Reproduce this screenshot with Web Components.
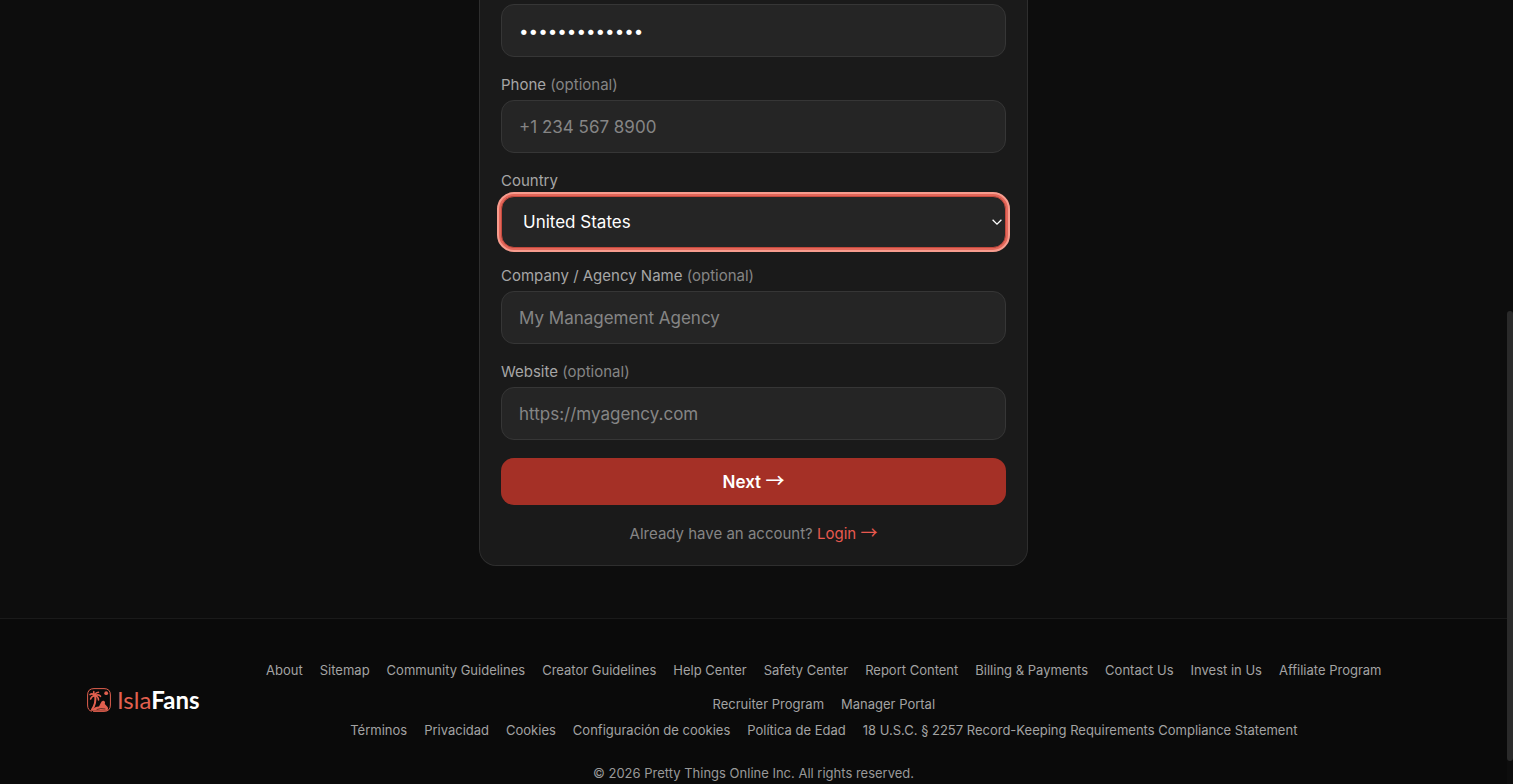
<!DOCTYPE html>
<html lang="es">
<head>
  <meta charset="utf-8">
  <meta name="viewport" content="width=device-width, initial-scale=1">
  <title>IslaFans</title>
  <style>
    body {
      background: #0d0d0d;
      color: #a3a3a3;
      font-family: Inter, "Liberation Sans", sans-serif;
      margin: 0;
    }
  </style>
</head>
<body>
  <isla-page>
    <isla-card>
      <isla-field type="password" label="Password" value="management123" bare></isla-field>
      <isla-field type="tel" label="Phone" placeholder="+1 234 567 8900" optional></isla-field>
      <isla-select label="Country" options="United States,Canada,España,México"></isla-select>
      <isla-field type="text" label="Company / Agency Name" placeholder="My Management Agency" optional></isla-field>
      <isla-field type="url" label="Website" placeholder="https://myagency.com" optional></isla-field>
      <isla-button>Next</isla-button>
      <isla-prompt link-text="Login">Already have an account?</isla-prompt>
    </isla-card>

    <isla-footer slot="footer">
      <isla-logo slot="logo"></isla-logo>
      <isla-links items="About|Sitemap|Community Guidelines|Creator Guidelines|Help Center|Safety Center|Report Content|Billing &amp; Payments|Contact Us|Invest in Us|Affiliate Program|Recruiter Program|Manager Portal"></isla-links>
      <isla-links items="Términos|Privacidad|Cookies|Configuración de cookies|Política de Edad|18 U.S.C. § 2257 Record-Keeping Requirements Compliance Statement"></isla-links>
      <span slot="copyright">© 2026 Pretty Things Online Inc. All rights reserved.</span>
    </isla-footer>
  </isla-page>

  <script>
    class Page extends HTMLElement {
      constructor() {
        super();

        this.attachShadow({ mode: 'open' });
        this.shadowRoot.innerHTML = `
          <style>
            :host {
              display: flex;
              min-height: 100vh;
            }

            #content {
              display: flex;
              flex: 1;
              flex-direction: column;
              min-width: 0;
            }

            main {
              display: flex;
              justify-content: center;
              padding-bottom: 52px;
            }

            #rail {
              display: flex;
              flex-direction: column;
              height: 100vh;
              position: sticky;
              top: 0;
              width: 6px;
            }

            #before { flex: 311; }
            #after { flex: 23; }

            #thumb {
              background: #2a2a2a;
              border-radius: 3px;
              flex: 450;
            }
          </style>

          <div id="content">
            <main><slot></slot></main>
            <slot name="footer"></slot>
          </div>
          <div id="rail" aria-hidden="true">
            <div id="before"></div>
            <div id="thumb"></div>
            <div id="after"></div>
          </div>
        `;
      }
    }

    class Card extends HTMLElement {
      constructor() {
        super();

        this.attachShadow({ mode: 'open' });
        this.shadowRoot.innerHTML = `
          <style>
            :host {
              background: #1a1a1a;
              border: 1px solid #2e2e2e;
              border-radius: 0 0 17px 17px;
              border-top: 0;
              box-sizing: border-box;
              max-width: 549px;
              padding: 4px 21px 21px;
              width: 100%;
            }

            form {
              display: flex;
              flex-direction: column;
              gap: 18px;
            }
          </style>

          <form><slot></slot></form>
        `;
      }
    }

    // Styles shared by every labelled control
    const controlStyles = `
      :host {
        display: flex;
        flex-direction: column;
        gap: 5px;
      }

      label {
        color: #a6a6a6;
        font-size: 15px;
        line-height: 20px;
      }

      label span {
        color: #858585;
      }

      input,
      select {
        appearance: none;
        background: #252525;
        border: 1px solid #363636;
        border-radius: 13px;
        box-sizing: border-box;
        color: #fff;
        font-family: inherit;
        font-size: 17px;
        margin: 0;
        outline: 0;
        width: 100%;
      }
    `;

    class Field extends HTMLElement {
      constructor() {
        super();

        this.attachShadow({ mode: 'open' });
      }

      connectedCallback() {
        this._build();
      }

      _build() {
        const label = this.getAttribute('label');
        const optional = this.hasAttribute('optional') ? ' <span>(optional)</span>' : '';
        const bare = this.hasAttribute('bare');

        this.shadowRoot.innerHTML = `
          <style>
            ${controlStyles}

            input {
              height: 53px;
              padding: 0 17px;
            }

            input::placeholder {
              color: #858585;
              opacity: 1;
            }
          </style>

          ${bare ? '' : `<label for="control">${label}${optional}</label>`}
          <input id="control" ${bare ? `aria-label="${label}"` : ''}>
        `;

        const input = this.shadowRoot.getElementById('control');
        input.type = this.getAttribute('type') || 'text';
        input.placeholder = this.getAttribute('placeholder') || '';
        input.value = this.getAttribute('value') || '';
      }
    }

    class Select extends HTMLElement {
      constructor() {
        super();

        this.attachShadow({ mode: 'open' });
      }

      connectedCallback() {
        this._build();
      }

      _build() {
        const options = this.getAttribute('options').split(',');

        this.shadowRoot.innerHTML = `
          <style>
            ${controlStyles}

            #wrap {
              display: grid;
              position: relative;
            }

            select {
              border-color: #c44a3e;
              box-shadow: 0 0 0 3px #e4675a;
              height: 52px;
              outline: 2px solid #f79c8e;
              outline-offset: 2px;
              padding: 0 21px;
            }

            svg {
              height: 10px;
              pointer-events: none;
              position: absolute;
              right: 4px;
              top: 21px;
              width: 10px;
            }
          </style>

          <label for="control">${this.getAttribute('label')}</label>
          <div id="wrap">
            <select id="control">
              ${options.map(option => `<option>${option}</option>`).join('')}
            </select>
            <svg viewBox="0 0 10 10" fill="none" stroke="#fff" stroke-width="1.3" aria-hidden="true">
              <path d="M.6 2.8 5 7.2 9.4 2.8"/>
            </svg>
          </div>
        `;
      }
    }

    class Button extends HTMLElement {
      constructor() {
        super();

        this.attachShadow({ mode: 'open' });
        this.shadowRoot.innerHTML = `
          <style>
            :host {
              display: flex;
            }

            button {
              background: #a53026;
              border: 0;
              border-radius: 13px;
              color: #fff;
              cursor: pointer;
              flex: 1;
              font-family: inherit;
              font-size: 17px;
              font-weight: 600;
              height: 47px;
              line-height: 21px;
              padding: 0;
            }

            span {
              font-family: "Noto Sans CJK JP", sans-serif;
              font-size: 19px;
              font-weight: 500;
              line-height: 1;
            }
          </style>

          <button type="button"><slot></slot> <span>→</span></button>
        `;
      }
    }

    class Prompt extends HTMLElement {
      constructor() {
        super();

        this.attachShadow({ mode: 'open' });
      }

      connectedCallback() {
        this.shadowRoot.innerHTML = `
          <style>
            :host {
              color: #858585;
              display: block;
              font-size: 15px;
              line-height: 21px;
              text-align: center;
            }

            a {
              color: #e8594f;
              text-decoration: none;
            }

            span {
              font-family: "Noto Sans CJK JP", sans-serif;
              font-size: 17px;
              line-height: 1;
            }
          </style>

          <slot></slot> <a href="#login">${this.getAttribute('link-text')} <span>→</span></a>
        `;
      }
    }

    class Logo extends HTMLElement {
      constructor() {
        super();

        this.attachShadow({ mode: 'open' });
        this.shadowRoot.innerHTML = `
          <style>
            :host {
              display: block;
            }

            a {
              align-items: center;
              color: #e2604f;
              display: flex;
              font-family: Lato, sans-serif;
              font-size: 24px;
              gap: 6px;
              line-height: 24px;
              text-decoration: none;
            }

            svg {
              height: 24px;
              width: 24px;
            }

            b {
              color: #fff;
              font-weight: 700;
            }
          </style>

          <a href="#home">
            <svg viewBox="0 0 24 24" fill="none" stroke="currentColor" stroke-linecap="round" aria-hidden="true">
              <path d="M4.5 23.2Q.6 22.5.6 17V7Q.6.6 7 .6H17Q23.4.6 23.4 7V17Q23.4 23.4 17 23.4H6.5" stroke-width="1"/>
              <circle cx="19.2" cy="5.2" r="1.9" fill="currentColor" stroke="none"/>
              <path d="M8.2 7.8Q9.4 15 5 21.5" stroke-width="2"/>
              <path d="M8.2 7.8Q5.5 4.6 3 6.6M8.2 7.8Q4.6 7.6 3.6 11M8.2 7.8Q8 4.4 11.5 4.2M8.2 7.8Q11.5 5.6 13.5 8.3M8.2 7.8Q11.5 8.6 11.5 12M8.2 7.8Q6.2 4.6 6.8 3.6" stroke-width="1.6"/>
              <path d="M4 22.8Q8 18.2 12 18.4L13.6 15.2Q14.6 12.2 16.6 12.8Q18.6 13.4 17.8 16L20.8 19.2Q21.8 21.6 20 22.8Z" fill="currentColor" stroke="none"/>
              <path d="M10 21.4Q13.5 19.8 18 20.9" stroke="#0a0a0a" stroke-width=".6"/>
            </svg>
            <span>Isla<b>Fans</b></span>
          </a>
        `;
      }
    }

    class Links extends HTMLElement {
      constructor() {
        super();

        this.attachShadow({ mode: 'open' });
      }

      connectedCallback() {
        const items = this.getAttribute('items').split('|');

        this.shadowRoot.innerHTML = `
          <style>
            :host {
              display: block;
            }

            nav {
              display: flex;
              flex-wrap: wrap;
              gap: 14px 17px;
              justify-content: center;
            }

            a {
              color: inherit;
              text-decoration: none;
            }
          </style>

          <nav></nav>
        `;

        const nav = this.shadowRoot.querySelector('nav');
        items.forEach(text => {
          const link = document.createElement('a');
          link.href = '#';
          link.textContent = text;
          nav.appendChild(link);
        });
      }
    }

    class Footer extends HTMLElement {
      constructor() {
        super();

        this.attachShadow({ mode: 'open' });
        this.shadowRoot.innerHTML = `
          <style>
            :host {
              display: block;
              flex: 1;
            }

            footer {
              background: #0a0a0a;
              border-top: 1px solid #1a1a1a;
              box-sizing: border-box;
              display: flex;
              flex-direction: column;
              font-size: 13px;
              gap: 23px;
              line-height: 20px;
              min-height: 100%;
              padding: 41px 87px 0;
            }

            #top {
              align-items: center;
              display: flex;
              gap: 28px;
            }

            #links {
              display: flex;
              flex: 1;
              flex-direction: column;
              gap: 6px;
              min-width: 0;
            }

            #copyright {
              color: #999;
              text-align: center;
            }
          </style>

          <footer>
            <div id="top">
              <slot name="logo"></slot>
              <div id="links"><slot></slot></div>
            </div>
            <div id="copyright"><slot name="copyright"></slot></div>
          </footer>
        `;
      }
    }

    customElements.define('isla-page', Page);
    customElements.define('isla-card', Card);
    customElements.define('isla-field', Field);
    customElements.define('isla-select', Select);
    customElements.define('isla-button', Button);
    customElements.define('isla-prompt', Prompt);
    customElements.define('isla-logo', Logo);
    customElements.define('isla-links', Links);
    customElements.define('isla-footer', Footer);
  </script>
</body>
</html>
